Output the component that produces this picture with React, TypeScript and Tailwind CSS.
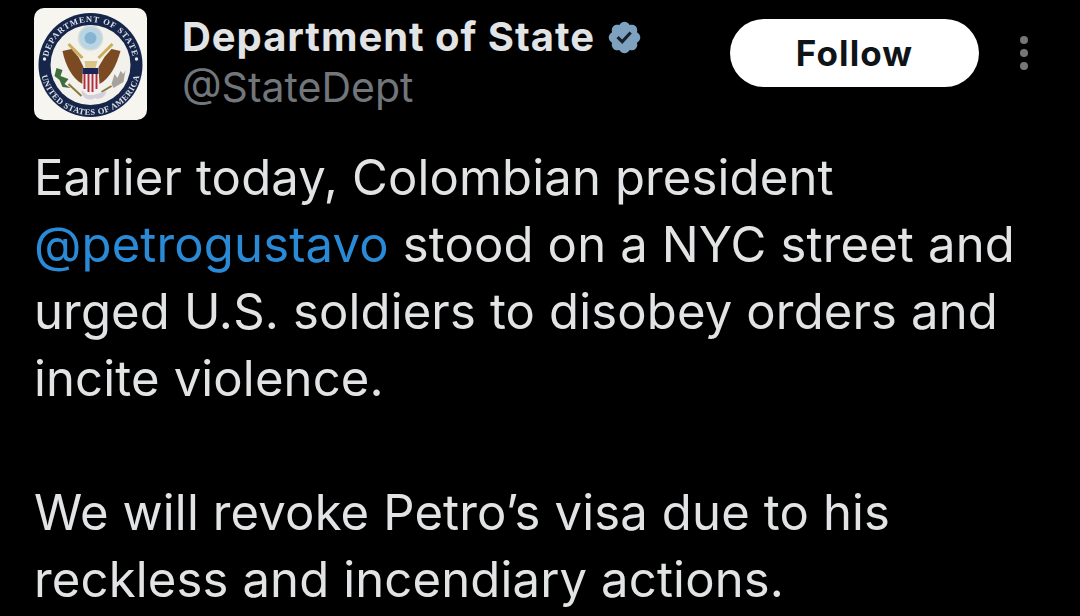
const f = "font-['Inter','Noto_Sans',sans-serif]";

function Seal() {
  return (
    <svg viewBox="-1 0 112 112" className="w-full h-full blur-[0.4px]">
      <defs>
        <path id="topArc" d="M 12 57 A 43 43 0 0 1 98 57" />
        <path id="botArc" d="M 5.5 50 A 50 50 0 1 0 104.5 50" />
      </defs>
      <circle cx="55" cy="57" r="52" fill="#16264b" />
      <circle cx="55" cy="57" r="40" fill="#f2f1ec" />
      <text fontFamily="Liberation Serif" fontWeight="bold" fontSize="8.5" fill="#dfe1e6" letterSpacing="0.9">
        <textPath href="#topArc" startOffset="50%" textAnchor="middle">DEPARTMENT OF STATE</textPath>
      </text>
      <text fontFamily="Liberation Serif" fontWeight="bold" fontSize="8.5" fill="#dfe1e6" letterSpacing="0.5">
        <textPath href="#botArc" startOffset="50%" textAnchor="middle">UNITED STATES OF AMERICA</textPath>
      </text>
      <circle cx="9" cy="51" r="1.7" fill="#e8e8ea" />
      <circle cx="101" cy="51" r="1.7" fill="#e8e8ea" />
      <circle cx="55" cy="30" r="12" fill="#b9d5e4" stroke="#d8dcd6" strokeWidth="1.5" />
      <circle cx="55" cy="30" r="6" fill="#88b4d4" />
      <path d="M27 43 L36 41 L43 49 L48 59 L47 76 C36 70 30 57 27 43 Z" fill="#7b4a22" />
      <path d="M85 43 L76 41 L69 49 L63 59 L64 76 C75 70 81 57 85 43 Z" fill="#7b4a22" />
      <path d="M33 36 L47 50 M77 36 L63 50" stroke="#cdae58" strokeWidth="3" />
      <circle cx="55" cy="52" r="6.5" fill="#f6f2e4" />
      <path d="M49 53 L62 53 L60 60 H50 Z" fill="#d9c48a" />
      <path d="M47 60 H63 V77 C61 82 58 84 55 85 C52 84 49 82 47 77 Z" fill="#f0eef0" />
      <path d="M47 60 H63 V66 H47 Z" fill="#1b2558" />
      <path d="M49 66 V81 M53 66 V84 M57 66 V84 M61 66 V81" stroke="#b32a38" strokeWidth="1.9" />
      <path d="M21 60 L27 62 L25 68 L33 71 L29 76 L35 80 L27 79 L24 72 L19 68 Z" fill="#3f6e3c" />
      <path d="M33 76 L46 88" stroke="#8a7a3a" strokeWidth="2" />
      <path d="M76 76 L79 66 L82 70 L85 63 L88 66 L90 62 L88 74 L78 80 Z" fill="#a5a39b" />
      <path d="M66 84 L76 78" stroke="#8a7a3a" strokeWidth="2" />
      <path d="M46 82 C46 92 56 93 59 90 C63 92 70 90 71 83 L64 85 L58 87 L52 87 Z" fill="#d3cfdb" />
    </svg>
  );
}

function Badge() {
  return (
    <svg viewBox="0 0 22 22" className="w-[37px] h-[37px] shrink-0">
      <path fill="#7ea1bf" d="M20.396 11c-.018-.646-.215-1.275-.57-1.816-.354-.54-.852-.972-1.438-1.246.223-.607.27-1.264.14-1.897-.131-.634-.437-1.218-.882-1.687-.47-.445-1.053-.75-1.687-.882-.633-.13-1.29-.083-1.897.14-.273-.587-.704-1.086-1.245-1.44S11.647 1.62 11 1.604c-.646.017-1.273.213-1.813.568s-.969.854-1.24 1.44c-.608-.223-1.267-.272-1.902-.14-.635.13-1.22.436-1.69.882-.445.47-.749 1.055-.878 1.688-.13.633-.08 1.29.144 1.896-.587.274-1.087.705-1.443 1.245-.356.54-.555 1.17-.574 1.817.02.647.218 1.276.574 1.817.356.54.856.972 1.443 1.245-.224.606-.274 1.263-.144 1.896.13.634.433 1.218.877 1.688.47.443 1.054.747 1.687.878.633.132 1.29.084 1.897-.136.274.586.705 1.084 1.246 1.439.54.354 1.17.551 1.816.569.647-.016 1.276-.213 1.817-.567s.972-.854 1.245-1.44c.604.239 1.266.296 1.903.164.636-.132 1.22-.447 1.68-.907.46-.46.776-1.044.908-1.681s.075-1.299-.165-1.903c.586-.274 1.084-.705 1.439-1.246.354-.54.551-1.17.569-1.816z" />
      <path fill="#15202b" d="M9.662 14.85l-3.429-3.428 1.293-1.302 2.072 2.072 4.4-4.794 1.347 1.246z" />
    </svg>
  );
}

export default function App() {
  return (
    <div className={`w-[1080px] h-[616px] bg-black overflow-hidden ${f}`}>
      <div className="flex items-start pl-[34px] pt-2">
        <div className="w-[113px] h-[112px] rounded-[10px] bg-[#f6f5f0] shrink-0 overflow-hidden">
          <Seal />
        </div>
        <div className="ml-[35px] w-[548px] pt-[5px]">
          <div className="flex items-center h-[48px]">
            <span className="text-[40px] tracking-[0.95px] font-bold text-[#e1e3e4] whitespace-nowrap leading-[48px]">Department of State</span>
            <span className="ml-[11px] flex"><Badge /></span>
          </div>
          <div className="text-[41px] text-[#71767b] leading-[50px] mt-[1px]">@StateDept</div>
        </div>
        <div className="mt-[11px] w-[249px] h-[68px] rounded-full bg-white text-[#0f1419] font-bold text-[35px] tracking-[1.1px] flex items-center justify-center shrink-0">Follow</div>
        <div className="ml-[41px] mt-[28px] flex flex-col gap-[5px]">
          <span className="w-2 h-2 rounded-full bg-[#767676]"></span>
          <span className="w-2 h-2 rounded-full bg-[#767676]"></span>
          <span className="w-2 h-2 rounded-full bg-[#767676]"></span>
        </div>
      </div>
      <div className="pl-[34px] pt-6 text-[49px] tracking-[0.15px] leading-[67px] text-[#e1e3e4] whitespace-nowrap">
        <div>Earlier today, Colombian president</div>
        <div><span className="text-[#2b8ad6]">@petrogustavo</span> stood on a NYC street and</div>
        <div>urged U.S. soldiers to disobey orders and</div>
        <div>incite violence.</div>
        <div className="h-[67px]"></div>
        <div>We will revoke Petro’s visa due to his</div>
        <div>reckless and incendiary actions.</div>
      </div>
    </div>
  );
}
